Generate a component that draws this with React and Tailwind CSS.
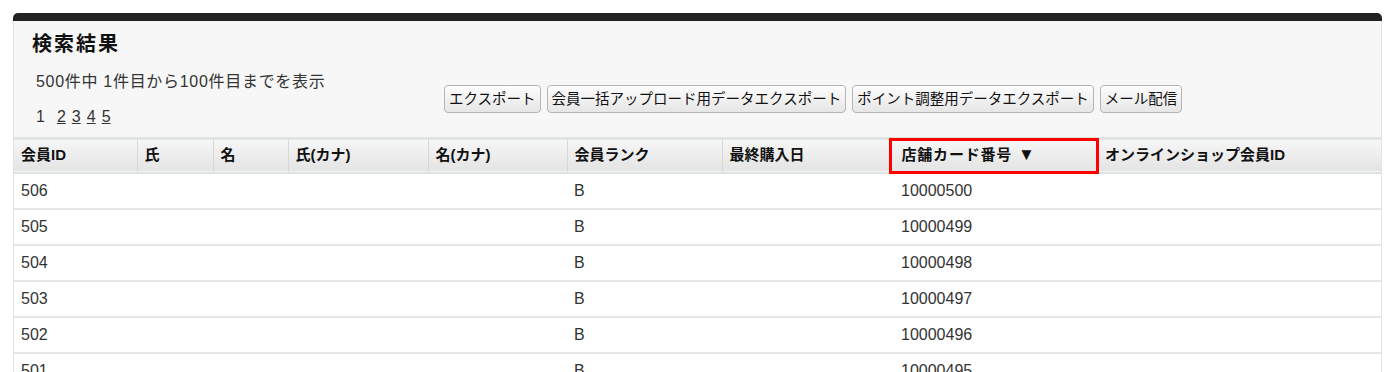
import React from "react";

const FONT = { fontFamily: '"Liberation Sans", "Noto Sans CJK JP", sans-serif' };

const cols = [
  { w: 123, label: "会員ID" },
  { w: 76, label: "氏" },
  { w: 75, label: "名" },
  { w: 140, label: "氏(カナ)" },
  { w: 139, label: "名(カナ)" },
  { w: 155, label: "会員ランク" },
  { w: 167, label: "最終購入日" },
  { w: 209, label: "店舗カード番号", sorted: true },
  { w: 283, label: "オンラインショップ会員ID" },
];

const rows = [506, 505, 504, 503, 502, 501].map((id, i) => ({
  id,
  rank: "B",
  card: String(10000500 - i),
}));

function Btn({ children }) {
  return (
    <button className="h-[28px] px-[4px] rounded-[4px] border border-[#b5b5b5] bg-gradient-to-b from-[#fdfdfd] to-[#e6e6e6] text-[14.5px] text-[#111] leading-none whitespace-nowrap shadow-[inset_0_1px_0_#fff]">
      {children}
    </button>
  );
}

export default function App() {
  return (
    <div className="w-[1390px] h-[372px] overflow-hidden bg-white pt-[13px] pl-[13px]" style={FONT}>
      <div className="w-[1369px]">
        <div className="h-[8px] bg-[#222] rounded-t-[5px]" />
        <div className="bg-[#f7f7f7] border-x border-[#e4e4e4]">
          <div className="pl-[18px] pt-[10px] text-[20px] font-bold text-[#111] leading-[26px] tracking-[2px]">
            検索結果
          </div>
          <div className="flex items-start">
            <div className="w-[430px] pl-[22px]">
              <div className="mt-[14px] text-[16px] leading-[22px] text-[#333] tracking-[0.7px]">
                500件中 1件目から100件目までを表示
              </div>
              <div className="mt-[13px] h-[22px] text-[16px] leading-[22px] text-[#333] flex">
                <span className="mr-[12px]">1</span>
                {[2, 3, 4, 5].map((n) => (
                  <a key={n} href="#" className="underline mr-[6px] text-[#333]">
                    {n}
                  </a>
                ))}
              </div>
            </div>
            <div className="flex gap-[6px] mt-[28px]">
              <Btn>エクスポート</Btn>
              <Btn>会員一括アップロード用データエクスポート</Btn>
              <Btn>ポイント調整用データエクスポート</Btn>
              <Btn>メール配信</Btn>
            </div>
          </div>
          <div className="h-[9px]" />
          <table className="table-fixed border-collapse w-[1367px] bg-white">
            <colgroup>
              {cols.map((c, i) => (
                <col key={i} style={{ width: c.w }} />
              ))}
            </colgroup>
            <thead>
              <tr className="h-[35px] bg-gradient-to-b from-[#f6f6f6] to-[#e4e4e4] border-t-[2px] border-b-[2px] border-[#dde3e3]">
                {cols.map((c, i) => (
                  <th
                    key={i}
                    className={`relative text-left font-bold text-[15px] text-[#111] pl-[7px] whitespace-nowrap ${
                      i < cols.length - 1 && !c.sorted ? "border-r border-[#d8d8d8]" : ""
                    }`}
                  >
                    {c.sorted ? (
                      <span className="pl-[5px] tracking-[0.8px]">
                        {c.label}
                        <span className="ml-[6px] text-[17px] leading-none">▼</span>
                      </span>
                    ) : (
                      c.label
                    )}
                    {c.sorted && (
                      <span className="absolute left-[-1px] top-[-1px] w-[210px] h-[36px] border-[3px] border-[#f00] pointer-events-none" />
                    )}
                  </th>
                ))}
              </tr>
            </thead>
            <tbody>
              {rows.map((r) => (
                <tr key={r.id} className="h-[36px] border-b-[2px] border-[#e3e7e8] text-[16px] text-[#333]">
                  <td className="pl-[7px]">{r.id}</td>
                  <td />
                  <td />
                  <td />
                  <td />
                  <td className="pl-[7px]">{r.rank}</td>
                  <td />
                  <td className="pl-[12px]">{r.card}</td>
                  <td />
                </tr>
              ))}
            </tbody>
          </table>
        </div>
      </div>
    </div>
  );
}
